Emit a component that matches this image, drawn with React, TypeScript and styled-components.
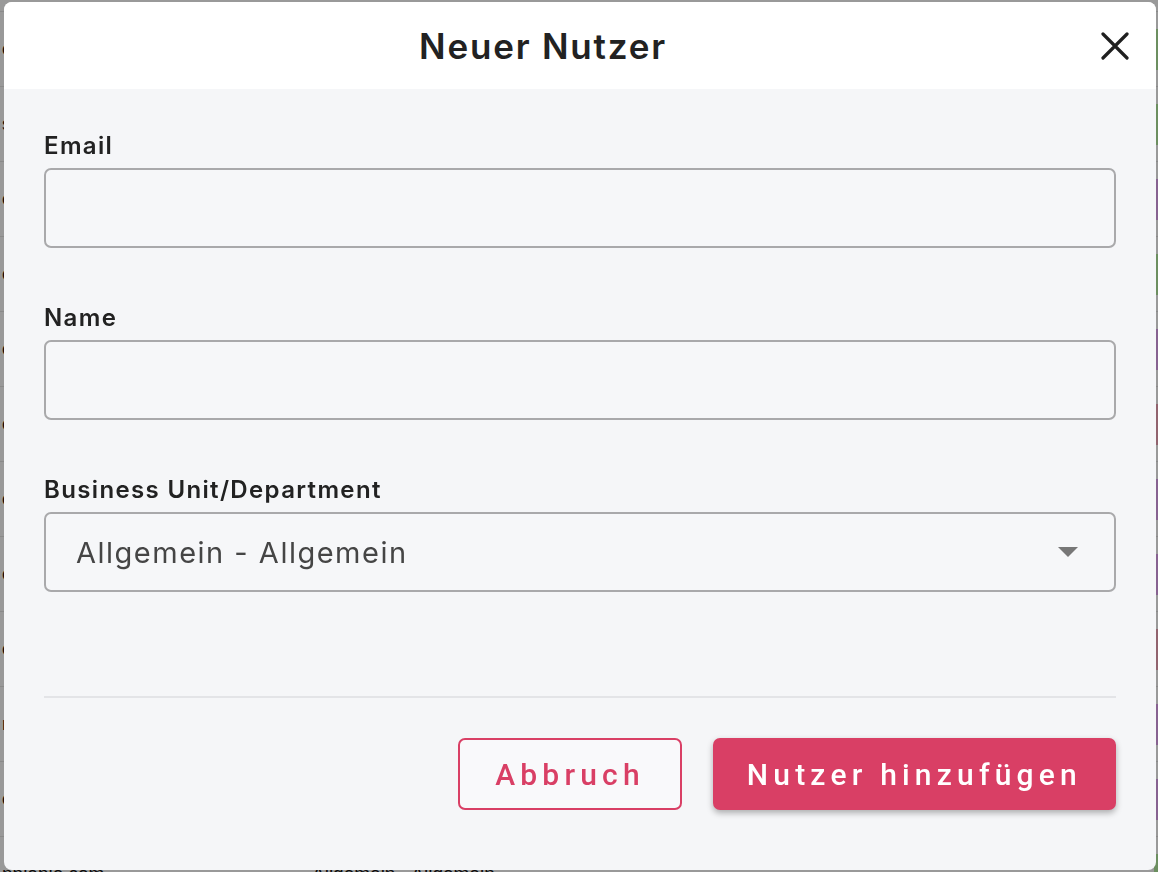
import * as React from 'react';
import styled, { createGlobalStyle } from 'styled-components';

const GlobalStyle = createGlobalStyle`
  html, body {
    margin: 0;
    padding: 0;
    height: 100%;
    overflow: hidden;
    background: #ffffff;
    font-family: Inter, "Noto Sans", sans-serif;
  }
`

const pink = '#d93f65';

interface BgRow {
  email: string;
  dept: string;
  tag: 'green' | 'purple' | 'mauve';
}

const rows: BgRow[] = [
  { email: 'o', dept: 'Allgemein - Allgemein', tag: 'green' },
  { email: 'o', dept: 'Allgemein - Allgemein', tag: 'green' },
  { email: 's', dept: 'Allgemein - Allgemein', tag: 'green' },
  { email: 'e', dept: 'Allgemein - Allgemein', tag: 'purple' },
  { email: 'c', dept: 'Allgemein - Allgemein', tag: 'green' },
  { email: 'c', dept: 'Allgemein - Allgemein', tag: 'purple' },
  { email: 'o', dept: 'Allgemein - Allgemein', tag: 'mauve' },
  { email: 'o', dept: 'Allgemein - Allgemein', tag: 'purple' },
  { email: 'c', dept: 'Allgemein - Allgemein', tag: 'purple' },
  { email: 'c', dept: 'Allgemein - Allgemein', tag: 'mauve' },
  { email: 'n', dept: 'Allgemein - Allgemein', tag: 'purple' },
  { email: 'c', dept: 'Allgemein - Allgemein', tag: 'purple' },
  { email: 'npiepie.com', dept: 'Allgemein - Allgemein', tag: 'green' },
];

const tagColours = {
  green: '#b4efa0',
  purple: '#e2a3f2',
  mauve: '#f2a6b8',
};

// the user table that sits behind the dialog
const Page = styled.div`
  margin-top: -63px;
  display: flex;
  flex-direction: column;
`

const TableRow = styled.div`
  height: 75px;
  border-bottom: 1px solid #e6e6e6;
  box-sizing: border-box;
  display: grid;
  grid-template-columns: 310px 1fr 60px;
  align-items: center;
  font-family: "Liberation Sans", Arial, sans-serif;
  font-size: 19px;
  color: #111;
`

const Cell = styled.div`
  padding-left: 2px;
  white-space: nowrap;
`

const Tag = styled.div<{ $tone: keyof typeof tagColours }>`
  justify-self: end;
  width: 44px;
  height: 41px;
  margin-right: -40px;
  background: ${p => tagColours[p.$tone]};
`

const Overlay = styled.div`
  position: fixed;
  inset: 0;
  background: rgba(0, 0, 0, 0.4);
  display: flex;
  padding: 2px 2px 2px 4px;
  box-sizing: border-box;
`

const Modal = styled.div`
  flex: 1;
  display: flex;
  flex-direction: column;
  background: #f5f6f8;
  border-radius: 8px;
  overflow: hidden;
`

const Header = styled.div`
  height: 87px;
  flex-shrink: 0;
  background: #ffffff;
  display: flex;
  align-items: center;
`

const Title = styled.h2`
  flex: 1;
  margin: 0;
  text-align: center;
  font-size: 35px;
  font-weight: 600;
  color: #222;
  letter-spacing: 1.8px;
`

const CloseButton = styled.button`
  width: 66px;
  height: 66px;
  margin-right: 8px;
  border: none;
  background: transparent;
  display: flex;
  align-items: center;
  justify-content: center;
  padding: 0;
  cursor: pointer;
`

const Body = styled.div`
  flex: 1;
  display: flex;
  flex-direction: column;
  padding: 42px 40px 0;
`

const Field = styled.div`
  display: flex;
  flex-direction: column;
  & + & {
    margin-top: 55px;
  }
`

const Label = styled.label`
  font-size: 24px;
  line-height: 29px;
  font-weight: 600;
  letter-spacing: 1.35px;
  color: #222;
  margin-bottom: 8px;
`

const Input = styled.input`
  height: 80px;
  box-sizing: border-box;
  border: 2px solid #a9a9ab;
  border-radius: 7px;
  background: #f6f7f9;
  padding: 0 30px;
  font-family: Inter, sans-serif;
  font-size: 29px;
  color: #444;
  outline: none;
`

const Select = styled.div`
  height: 80px;
  box-sizing: border-box;
  border: 2px solid #a9a9ab;
  border-radius: 7px;
  background: #f6f7f9;
  padding: 0 36px 0 30px;
  display: flex;
  align-items: center;
  justify-content: space-between;
  font-size: 29px;
  letter-spacing: 1.5px;
  color: #454545;
`

const Caret = styled.span`
  width: 0;
  height: 0;
  border-left: 10px solid transparent;
  border-right: 10px solid transparent;
  border-top: 10px solid #777;
`

const Divider = styled.hr`
  margin: 104px 0 0;
  border: none;
  border-top: 2px solid #e3e4e7;
`

const Footer = styled.div`
  display: flex;
  justify-content: flex-end;
  gap: 31px;
  margin-top: 40px;
`

const Button = styled.button<{ $primary?: boolean }>`
  height: 72px;
  box-sizing: border-box;
  border-radius: 7px;
  border: 2px solid ${pink};
  background: ${p => (p.$primary ? pink : '#f9f9fb')};
  color: ${p => (p.$primary ? '#ffffff' : pink)};
  box-shadow: ${p => (p.$primary ? '0 3px 6px rgba(0, 0, 0, 0.3)' : 'none')};
  font-family: Roboto, "Liberation Sans", sans-serif;
  font-weight: 500;
  font-size: 30px;
  letter-spacing: 5.2px;
  padding: 0 ${p => (p.$primary ? '32px' : '35px')};
  cursor: pointer;
`

const CloseIcon = () => (
  <svg width="28" height="28" viewBox="0 0 28 28">
    <path d="M2 2 L26 26 M26 2 L2 26" stroke="#1f1f1f" strokeWidth="3.2" strokeLinecap="round" />
  </svg>
)

export default function App() {
  return (
    <>
      <GlobalStyle />
      <Page>
        {rows.map((r, i) => (
          <TableRow key={i}>
            <Cell>{r.email}</Cell>
            <Cell>{r.dept}</Cell>
            <Tag $tone={r.tag} />
          </TableRow>
        ))}
      </Page>
      <Overlay>
        <Modal>
          <Header>
            <Title>Neuer Nutzer</Title>
            <CloseButton aria-label="Schließen">
              <CloseIcon />
            </CloseButton>
          </Header>
          <Body>
            <Field>
              <Label>Email</Label>
              <Input />
            </Field>
            <Field>
              <Label>Name</Label>
              <Input />
            </Field>
            <Field>
              <Label>Business Unit/Department</Label>
              <Select>
                <span>Allgemein - Allgemein</span>
                <Caret />
              </Select>
            </Field>
            <Divider />
            <Footer>
              <Button>Abbruch</Button>
              <Button $primary>Nutzer hinzufügen</Button>
            </Footer>
          </Body>
        </Modal>
      </Overlay>
    </>
  );
}
